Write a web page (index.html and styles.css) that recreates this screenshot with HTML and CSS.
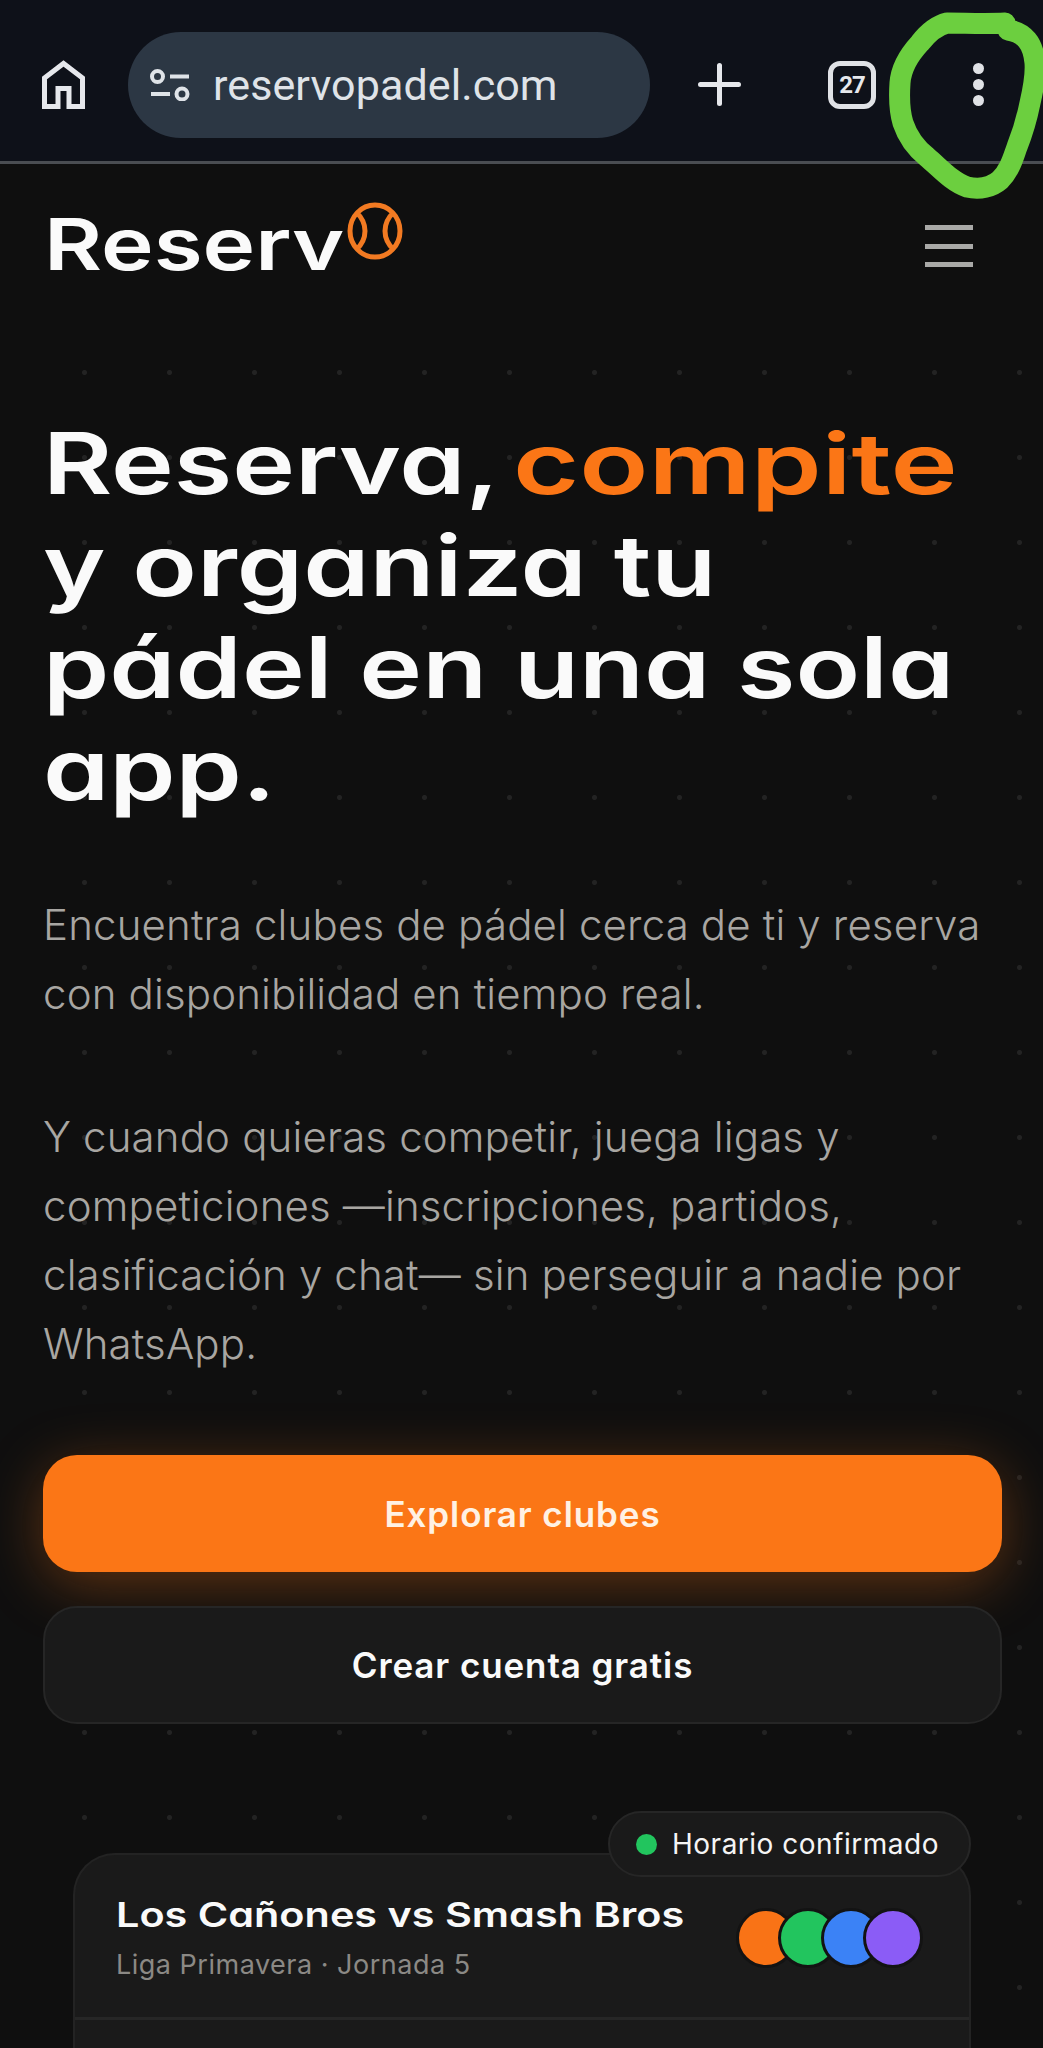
FILE: index.html
```html
<!DOCTYPE html>
<html lang="es">
<head>
    <meta charset="UTF-8">
    <meta name="viewport" content="width=device-width, initial-scale=1.0">
    <title>Reserv</title>
    <link rel="stylesheet" href="styles.css">
</head>
<body>
    <div class="browser_bar">
        <svg class="home_icon" width="43" height="49" viewBox="0 0 43 49" fill="none" stroke="#e6e8ec" stroke-width="5">
            <path d="M2.5 46.5V18L21.5 3.5L40.5 18V46.5H27V28.5H16V46.5Z"/>
        </svg>
        <div class="url_pill">
            <svg class="tune_icon" width="40" height="32" viewBox="0 0 40 32" fill="none" stroke="#dfe3e8" stroke-width="4">
                <circle cx="7.5" cy="7.5" r="5.5"/>
                <path d="M20 7.5H39"/>
                <circle cx="32" cy="25" r="5.5"/>
                <path d="M1 25H20"/>
            </svg>
            <span class="url_text">reservopadel.com</span>
        </div>
        <svg class="plus_icon" width="43" height="43" viewBox="0 0 43 43" stroke="#e6e8ec" stroke-width="5" stroke-linecap="round">
            <path d="M21.5 2.5V40.5M2.5 21.5H40.5"/>
        </svg>
        <div class="tabs_count">27</div>
        <div class="menu_dots"><i></i><i></i><i></i></div>
    </div>

    <nav class="site_nav">
        <div class="logo">
            <span class="logo_text">Reserv</span>
            <svg class="logo_ball" width="58" height="60" viewBox="0 0 58 60" fill="none" stroke="#f27a22" stroke-width="5">
                <ellipse cx="29" cy="30" rx="25" ry="26"/>
                <path d="M10 11C22 22 22 38 10 49M48 11C36 22 36 38 48 49"/>
            </svg>
        </div>
        <div class="burger"><i></i><i></i><i></i></div>
    </nav>

    <main class="hero">
        <h1 class="hero_title">Reserva, <span class="accent">compite</span><br>y organiza tu<br>pádel en una sola<br>app.</h1>

        <p class="hero_text">Encuentra clubes de pádel cerca de ti y reserva<br>con disponibilidad en tiempo real.</p>
        <p class="hero_text second">Y cuando quieras competir, juega ligas y<br>competiciones —inscripciones, partidos,<br>clasificación y chat— sin perseguir a nadie por<br>WhatsApp.</p>

        <a class="btn btn_primary">Explorar clubes</a>
        <a class="btn btn_secondary">Crear cuenta gratis</a>

        <section class="match_card">
            <div class="status_pill"><span class="status_dot"></span>Horario confirmado</div>
            <div class="match_head">
                <div>
                    <div class="match_title">Los Cañones vs Smash Bros</div>
                    <div class="match_sub">Liga Primavera · Jornada 5</div>
                </div>
                <div class="avatars">
                    <span class="avatar orange"></span>
                    <span class="avatar green"></span>
                    <span class="avatar blue"></span>
                    <span class="avatar purple"></span>
                </div>
            </div>
        </section>
    </main>

    <!-- marker ring drawn over the screenshot -->
    <svg class="marker_ring" width="1043" height="210" viewBox="0 0 1043 210" fill="none" stroke="#6ccf3f" stroke-width="21" stroke-linecap="round" stroke-linejoin="round">
        <path d="M1005 23C985 24 965 23 947 23C935 26 927 34 920 43C908 56 901 68 900 83C899 98 899 110 903 123C908 138 917 149 927 157C940 168 952 182 967 187C980 190 992 187 1000 180C1010 170 1013 158 1017 147C1023 132 1027 118 1030 103C1033 90 1036 76 1035 63C1034 52 1032 46 1027 40C1022 34 1015 31 1008 30"/>
    </svg>
</body>
</html>
```

FILE: styles.css
```css
* {
    box-sizing: border-box;
}
html, body {
    margin: 0;
    height: 2048px;
    overflow: hidden;
}
body {
    position: relative;
    background-color: #0f0f0f;
    font-family: "Inter", sans-serif;
    color: #fafafa;
}

/* browser chrome */
.browser_bar {
    display: flex;
    align-items: center;
    height: 164px;
    padding: 8px 0 0 42px;
    background-color: #0e1119;
    border-bottom: solid 3px #4a4d52;
}
.home_icon {
    flex: none;
}
.url_pill {
    display: flex;
    align-items: center;
    flex: none;
    width: 522px;
    height: 106px;
    margin-left: 43px;
    padding-left: 22px;
    border-radius: 53px;
    background-color: #2c3744;
}
.url_text {
    margin-left: 23px;
    font-family: "Roboto", sans-serif;
    font-size: 43px;
    letter-spacing: .1px;
    color: #dfe3e8;
}
.plus_icon {
    flex: none;
    margin-left: 48px;
}
.tabs_count {
    display: flex;
    align-items: center;
    justify-content: center;
    flex: none;
    width: 48px;
    height: 48px;
    margin-left: 87px;
    border: solid 5px #e0e2e6;
    border-radius: 12px;
    font-family: "Roboto", sans-serif;
    font-size: 24px;
    font-weight: 700;
    letter-spacing: -1px;
    color: #e6e8ec;
}
.menu_dots {
    display: flex;
    flex-direction: column;
    gap: 5px;
    margin-left: 97px;
}
.menu_dots i {
    display: block;
    width: 11px;
    height: 11px;
    border-radius: 50%;
    background-color: #e0e2e6;
}
.marker_ring {
    position: absolute;
    top: 0;
    left: 0;
}

/* site nav */
.site_nav {
    display: flex;
    align-items: flex-start;
    justify-content: space-between;
    height: 156px;
    padding: 40px 70px 0 44px;
}
.logo {
    display: flex;
    align-items: flex-start;
}
.logo_text,
.hero_title,
.match_title {
    font-family: "Inter", sans-serif;
    font-feature-settings: "cv11";
    font-weight: 600;
    transform-origin: 0 0;
    white-space: nowrap;
}
.logo_text {
    display: block;
    width: 298px;
    font-size: 72px;
    line-height: 80px;
    transform: scaleX(1.237);
}
.logo_ball {
    margin-top: -3px;
    margin-left: 4px;
}
.burger {
    display: flex;
    flex-direction: column;
    gap: 13.5px;
    width: 48px;
    margin-top: 21px;
}
.burger i {
    display: block;
    height: 5px;
    background-color: #a9a9a7;
}

/* hero */
.hero {
    position: relative;
    height: 1728px;
    padding: 93px 41px 0 43px;
}
.hero::before {
    content: "";
    position: absolute;
    top: 10px;
    left: 42px;
    right: 0;
    bottom: 0;
    background-image: radial-gradient(circle, #232323 0, #232323 2px, transparent 3px);
    background-size: 85px 85px;
}
.hero_title {
    position: relative;
    width: 767px;
    margin: 0;
    font-size: 85px;
    line-height: 102px;
    transform: scaleX(1.25);
}
.accent {
    display: inline-block;
    margin-left: -9px;
    color: #fb7616;
    transform: scaleX(1.07);
    transform-origin: 0 0;
}
.hero_text {
    position: relative;
    margin: 69px 0 0;
    font-size: 42px;
    line-height: 69px;
    font-weight: 300;
    letter-spacing: .15px;
    color: #a8a6a2;
}
.hero_text.second {
    margin-top: 74px;
}

/* buttons */
.btn {
    display: flex;
    align-items: center;
    justify-content: center;
    height: 117px;
    border-radius: 34px;
    font-size: 35px;
    font-weight: 600;
    letter-spacing: .9px;
}
.btn_primary {
    position: relative;
    margin-top: 77px;
    background-color: #fb7616;
    color: #fff1e3;
    box-shadow: 0 12px 60px -2px rgba(251, 118, 22, .36);
}
.btn_secondary {
    position: relative;
    height: 118px;
    margin-top: 34px;
    background-color: #1a1a1a;
    border: solid 2px #262626;
    color: #fafafa;
}

/* match card */
.match_card {
    position: relative;
    height: 195px;
    margin: 129px 31px 0 30px;
    background-color: #1a1a1a;
    border: solid 2px #232323;
    border-bottom: none;
    border-radius: 42px 42px 0 0;
}
.status_pill {
    position: absolute;
    top: -44px;
    right: -2px;
    display: flex;
    align-items: center;
    width: 363px;
    height: 66px;
    padding-left: 26px;
    border: solid 2px #262626;
    border-radius: 33px;
    background-color: #1a1a1a;
    font-size: 28px;
    letter-spacing: .5px;
    color: #f5f5f5;
}
.status_dot {
    width: 21px;
    height: 21px;
    margin-right: 15px;
    border-radius: 50%;
    background-color: #22c55e;
}
.match_head {
    display: flex;
    justify-content: space-between;
    height: 165px;
    padding: 38px 46px 0 41px;
    border-bottom: solid 3px #262626;
}
.match_title {
    width: 480px;
    font-size: 34px;
    line-height: 44px;
    transform: scaleX(1.217);
}
.match_sub {
    margin-top: 12px;
    font-size: 27px;
    line-height: 32px;
    letter-spacing: .5px;
    color: #8b8985;
}
.avatars {
    display: flex;
    margin-top: 15px;
}
.avatar {
    width: 60px;
    height: 60px;
    margin-left: -17.5px;
    border: solid 3px #131313;
    border-radius: 50%;
}
.avatar.orange {
    background-color: #f97316;
}
.avatar.green {
    background-color: #22c55e;
}
.avatar.blue {
    background-color: #3b82f6;
}
.avatar.purple {
    background-color: #8b5cf6;
}
```
